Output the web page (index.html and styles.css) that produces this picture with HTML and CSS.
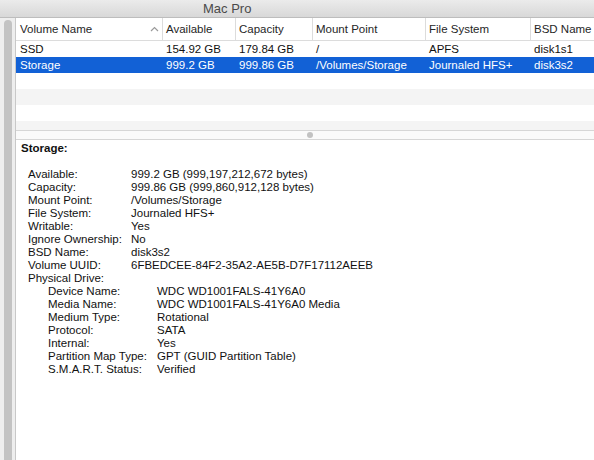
FILE: index.html
```html
<!DOCTYPE html>
<html>
<head>
<meta charset="utf-8">
<link rel="stylesheet" href="styles.css">
</head>
<body>
<div class="window">
  <div class="titlebar"><span class="title">Mac Pro</span></div>
  <div class="main">
    <div class="sidebar"><div class="strip"></div></div>
    <div class="content">
      <div class="table">
        <div class="row head">
          <div class="cell c1">Volume Name<svg class="sort" width="9" height="6" viewBox="0 0 9 6"><polyline points="1,5 4.5,1.5 8,5" fill="none" stroke="#9a9a9a" stroke-width="1.2"/></svg></div>
          <div class="cell c2">Available</div>
          <div class="cell c3">Capacity</div>
          <div class="cell c4">Mount Point</div>
          <div class="cell c5">File System</div>
          <div class="cell c6">BSD Name</div>
        </div>
        <div class="rows">
          <div class="row">
            <div class="cell c1">SSD</div>
            <div class="cell c2">154.92 GB</div>
            <div class="cell c3">179.84 GB</div>
            <div class="cell c4">/</div>
            <div class="cell c5">APFS</div>
            <div class="cell c6">disk1s1</div>
          </div>
          <div class="row sel">
            <div class="cell c1">Storage</div>
            <div class="cell c2">999.2 GB</div>
            <div class="cell c3">999.86 GB</div>
            <div class="cell c4">/Volumes/Storage</div>
            <div class="cell c5">Journaled HFS+</div>
            <div class="cell c6">disk3s2</div>
          </div>
          <div class="row"></div>
          <div class="row alt"></div>
          <div class="row"></div>
          <div class="row alt"></div>
        </div>
      </div>
      <div class="splitter"><span class="dot"></span></div>
      <div class="details">
        <div class="dtitle">Storage:</div>
        <div class="kv"><span class="k">Available:</span><span class="v">999.2 GB (999,197,212,672 bytes)</span></div>
        <div class="kv"><span class="k">Capacity:</span><span class="v">999.86 GB (999,860,912,128 bytes)</span></div>
        <div class="kv"><span class="k">Mount Point:</span><span class="v">/Volumes/Storage</span></div>
        <div class="kv"><span class="k">File System:</span><span class="v">Journaled HFS+</span></div>
        <div class="kv"><span class="k">Writable:</span><span class="v">Yes</span></div>
        <div class="kv"><span class="k">Ignore Ownership:</span><span class="v">No</span></div>
        <div class="kv"><span class="k">BSD Name:</span><span class="v">disk3s2</span></div>
        <div class="kv"><span class="k">Volume UUID:</span><span class="v">6FBEDCEE-84F2-35A2-AE5B-D7F17112AEEB</span></div>
        <div class="kv"><span class="k">Physical Drive:</span></div>
        <div class="nested">
          <div class="kv"><span class="k">Device Name:</span><span class="v">WDC WD1001FALS-41Y6A0</span></div>
          <div class="kv"><span class="k">Media Name:</span><span class="v">WDC WD1001FALS-41Y6A0 Media</span></div>
          <div class="kv"><span class="k">Medium Type:</span><span class="v">Rotational</span></div>
          <div class="kv"><span class="k">Protocol:</span><span class="v">SATA</span></div>
          <div class="kv"><span class="k">Internal:</span><span class="v">Yes</span></div>
          <div class="kv"><span class="k">Partition Map Type:</span><span class="v">GPT (GUID Partition Table)</span></div>
          <div class="kv"><span class="k">S.M.A.R.T. Status:</span><span class="v">Verified</span></div>
        </div>
      </div>
    </div>
  </div>
</div>
</body>
</html>
```
FILE: styles.css
```css
html, body {
  margin: 0;
  padding: 0;
  width: 594px;
  height: 460px;
  overflow: hidden;
  background: #fff;
}
.window {
  display: flex;
  flex-direction: column;
  height: 460px;
  font-family: "Liberation Sans", Arial, sans-serif;
  font-size: 11.5px;
  color: #111;
}
.titlebar {
  height: 17px;
  border-bottom: 1px solid #bdbdbd;
  background: linear-gradient(#ebebeb, #d8d8d8);
  display: flex;
  align-items: center;
  padding-left: 203px;
}
.title {
  font-size: 13px;
  color: #4a4a4a;
  line-height: 17px;
}
.main {
  flex: 1;
  display: flex;
}
.sidebar {
  width: 15px;
  border-right: 1px solid #c8c8c8;
  background: #eeeeee;
  display: flex;
}
.strip {
  width: 8px;
  margin-left: 4px;
  margin-top: 2px;
  background: #c3c3c3;
  border-radius: 4px 4px 0 0;
}
.content {
  flex: 1;
  display: flex;
  flex-direction: column;
  min-width: 0;
}
.table {
  height: 112px;
  border-bottom: 1px solid #d6d6d6;
  overflow: hidden;
}
.row {
  display: flex;
  height: 16px;
  line-height: 16px;
  white-space: nowrap;
}
.row.alt { background: #f4f4f4; }
.row.sel { background: #1261d6; color: #fff; }
.row.head {
  height: 22px;
  line-height: 22px;
  border-bottom: 1px solid #dcdcdc;
  color: #262626;
}
.cell {
  padding-left: 4px;
  box-sizing: border-box;
  flex: none;
  position: relative;
}
.head .cell + .cell { border-left: 1px solid #dcdcdc; }
.c1 { width: 146px; }
.c2 { width: 73px; }
.c3 { width: 77px; }
.c4 { width: 113px; }
.c5 { width: 105px; }
.c6 { width: 70px; }
.head .c2, .head .c3, .head .c4, .head .c5, .head .c6 { padding-left: 3px; }
.sort {
  position: absolute;
  left: 134px;
  top: 8px;
}
.splitter {
  height: 8px;
  background: #fafafa;
  border-bottom: 1px solid #d6d6d6;
  position: relative;
}
.dot {
  position: absolute;
  left: 291px;
  top: 1px;
  width: 6px;
  height: 6px;
  border-radius: 50%;
  background: #c2c2c2;
}
.details {
  padding: 2px 0 0 5px;
  line-height: 13px;
}
.dtitle {
  font-weight: bold;
  margin-bottom: 13px;
  color: #111;
}
.kv {
  display: flex;
  padding-left: 7px;
  white-space: nowrap;
}
.k {
  width: 103px;
  flex: none;
}
.nested {
  padding-left: 20px;
}
.nested .k { width: 109px; }
```
